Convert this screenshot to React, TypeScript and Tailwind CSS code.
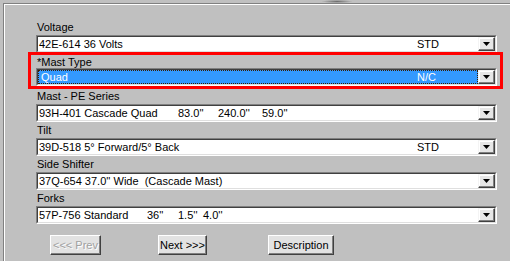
import type { ReactNode } from "react";

function DropButton() {
  return (
    <div className="flex h-full w-[17px] items-center justify-center border border-t-[#f4f4f4] border-l-[#f4f4f4] border-b-[#404040] border-r-[#404040] bg-[#e6e6e6] shadow-[inset_-1px_-1px_0_#808080,inset_1px_1px_0_#ffffff]">
      <svg width="7" height="4" viewBox="0 0 7 4">
        <polygon points="0,0 7,0 3.5,4" fill="#000" />
      </svg>
    </div>
  );
}

function Combo({ children, selected }: { children: ReactNode; selected?: boolean }) {
  return (
    <div className="mt-[1px] flex h-[18px] w-[461px] border border-t-[#808080] border-l-[#808080] border-b-white border-r-white">
      <div className="flex flex-1 border border-t-[#404040] border-l-[#404040] border-b-[#dfdfdf] border-r-[#dfdfdf] bg-white">
        {selected ? (
          <div className="flex flex-1 items-center border border-dotted border-[#3a1c00] bg-[#3399ff] pl-[2px] text-white">
            {children}
          </div>
        ) : (
          <div className="flex flex-1 items-center pl-[1px]">{children}</div>
        )}
        <DropButton />
      </div>
    </div>
  );
}

function Label({ text }: { text: string }) {
  return <div className="h-[13px] pl-[1px] leading-[13px]">{text}</div>;
}

function WinButton({ text, disabled, className }: { text: string; disabled?: boolean; className: string }) {
  return (
    <div
      className={
        "flex h-[20px] items-center justify-center border border-t-white border-l-white border-b-[#404040] border-r-[#404040] bg-[#e2e2e2] shadow-[inset_-1px_-1px_0_#808080] " +
        className
      }
    >
      {disabled ? (
        <span className="text-[#a0a0a0] [text-shadow:1px_1px_0_#ffffff]">{text}</span>
      ) : (
        <span>{text}</span>
      )}
    </div>
  );
}

export default function App() {
  return (
    <div className="h-[261px] w-[510px] overflow-hidden bg-[#c0c0c0] font-['Liberation_Sans',Arial,sans-serif] text-[11px] text-black">
      <div className="flex h-[3px]">
        <div className="ml-[322px] h-[3px] w-[30px] bg-[radial-gradient(ellipse_at_center,#6e6e6e_0%,#c0c0c0_75%)]" />
      </div>
      <div className="ml-[3px] h-[258px] border-l border-t border-[#808080] pl-[32px] pt-[17px] shadow-[inset_1px_1px_0_#ffffff]">
        <div className="flex w-[461px] flex-col">
          <Label text="Voltage" />
          <Combo>
            <span className="flex-1">42E-614 36 Volts</span>
            <span className="w-[61px]">STD</span>
          </Combo>

          <div className="-ml-[8px] -mr-[6px] -mt-[1px] border-[3px] border-[#ff0000] pl-[5px] pr-[3px]">
            <div className="h-[12px] pl-[1px] leading-[15px]">*Mast Type</div>
            <Combo selected>
              <span className="flex-1">Quad</span>
              <span className="w-[60px]">N/C</span>
            </Combo>
          </div>

          <div className="mt-[1px]">
            <Label text="Mast - PE Series" />
            <Combo>
              <span className="w-[139px]">93H-401 Cascade Quad</span>
              <span className="w-[40px]">83.0''</span>
              <span className="w-[44px]">240.0''</span>
              <span className="flex-1">59.0''</span>
            </Combo>
          </div>

          <div className="mt-[2px]">
            <Label text="Tilt" />
            <Combo>
              <span className="flex-1">39D-518 5° Forward/5° Back</span>
              <span className="w-[61px]">STD</span>
            </Combo>
          </div>

          <div className="mt-[2px]">
            <Label text="Side Shifter" />
            <Combo>
              <span className="flex-1 whitespace-pre">37Q-654 37.0'' Wide  (Cascade Mast)</span>
            </Combo>
          </div>

          <div className="mt-[2px]">
            <Label text="Forks" />
            <Combo>
              <span className="w-[108px]">57P-756 Standard</span>
              <span className="w-[31px]">36''</span>
              <span className="w-[25px]">1.5''</span>
              <span className="flex-1">4.0''</span>
            </Combo>
          </div>

          <div className="mt-[11px] flex">
            <WinButton text="<<< Prev" disabled className="ml-[14px] w-[51px]" />
            <WinButton text="Next >>>" className="ml-[57px] w-[49px]" />
            <WinButton text="Description" className="ml-[61px] w-[66px]" />
          </div>
        </div>
      </div>
    </div>
  );
}
